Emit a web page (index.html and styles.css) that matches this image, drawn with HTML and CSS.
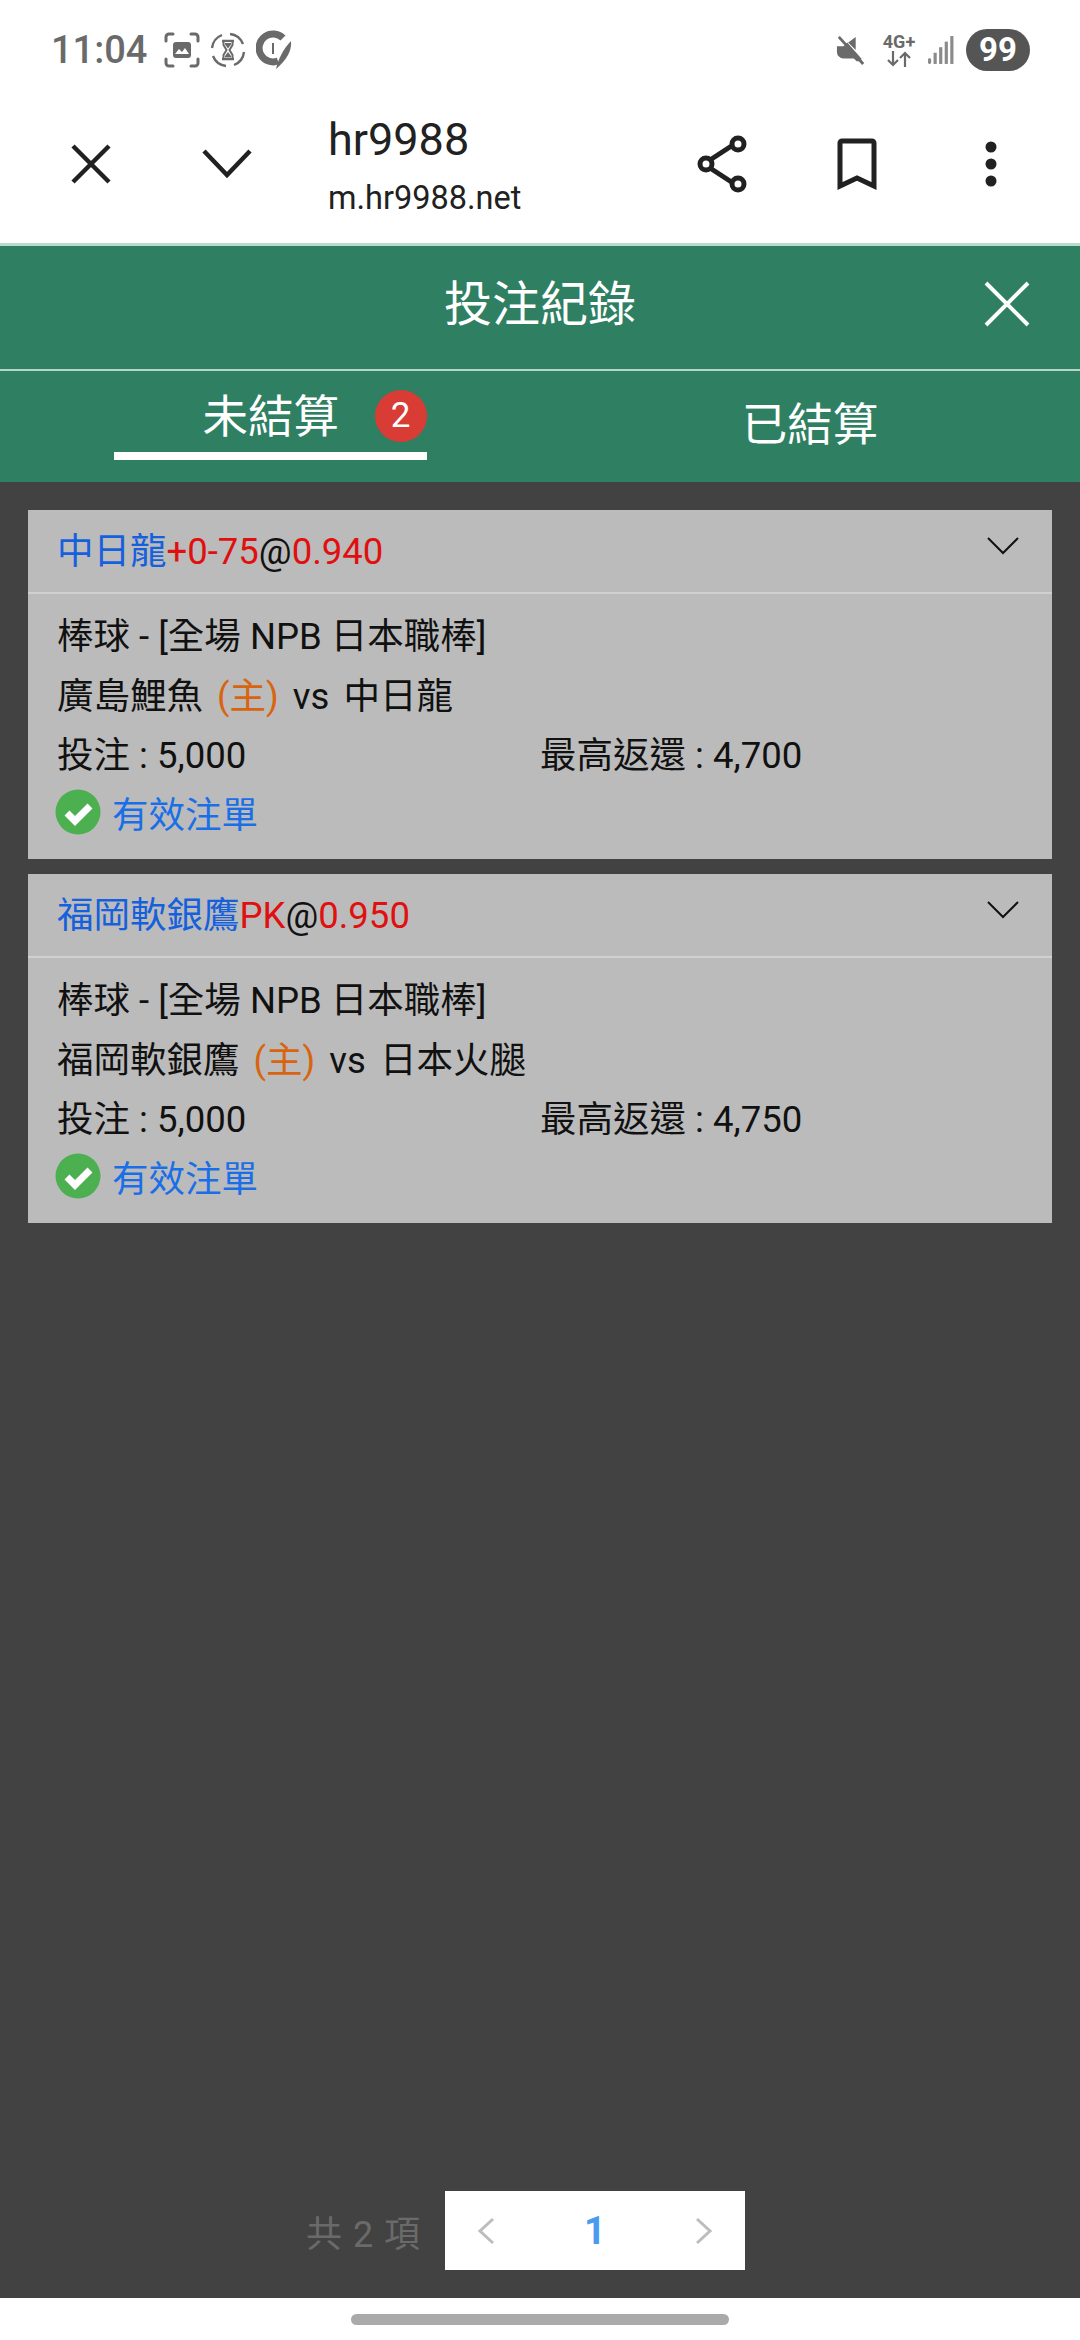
FILE: index.html
```html
<!doctype html>
<html lang="zh-Hant">
<head>
  <title>投注紀錄</title>
  <meta charset="utf-8">
  <link rel="stylesheet" href="styles.css">
</head>
<body>

<div class="status">
  <span class="time">11:04</span>
  <svg class="st-icon" width="36" height="36" viewBox="0 0 36 36" fill="none" stroke="#6a6a6a" stroke-width="3" stroke-linecap="round">
    <path d="M2 9V5a3 3 0 0 1 3-3h4M27 2h4a3 3 0 0 1 3 3v4M34 27v4a3 3 0 0 1-3 3h-4M9 34H5a3 3 0 0 1-3-3v-4"/>
    <rect x="9" y="10" width="18" height="16" rx="3" fill="#6a6a6a" stroke="none"/>
    <path d="M11 22l4-5 3 3 3-4 4 6z" fill="#fff" stroke="none"/>
  </svg>
  <svg class="st-icon" width="36" height="36" viewBox="0 0 36 36" fill="none" stroke="#6a6a6a" stroke-width="2.4">
    <path d="M20 2a16 16 0 0 1 13 10M34 20a16 16 0 0 1-10 13M16 34A16 16 0 0 1 3 24M2 16A16 16 0 0 1 12 3"/>
    <path d="M12 9h12M12 27h12" stroke-width="2.4"/>
    <path d="M13.5 9h9v4l-3 5 3 5v4h-9v-4l3-5-3-5z" fill="#fff" stroke-width="2"/>
    <path d="M15 11h6v1.5l-3 4-3-4zM15 25.500v-1.500l3-4 3 4v1.500z" fill="#6a6a6a" stroke="none"/>
  </svg>
  <svg class="st-icon" width="36" height="40" viewBox="0 0 36 40" fill="none">
    <path d="M27 8A14 14 0 1 0 22 31" stroke="#6a6a6a" stroke-width="7"/>
    <path d="M35 11c1 9-4 19-15 28 2-9 7-20 15-28z" fill="#6a6a6a"/>
    <path d="M17 13v11" stroke="#6a6a6a" stroke-width="2"/>
  </svg>
  <span class="status-gap"></span>
  <svg class="st-right" width="30" height="32" viewBox="0 0 32 32" fill="#6a6a6a">
    <path d="M1 12h7l4-4 15 17v3h-5l-3-3H8a7 7 0 0 1-7-7z"/>
    <path d="M21 2v14L13 8z"/>
    <path d="M3 2l26 29" stroke="#6a6a6a" stroke-width="3"/>
  </svg>
  <div class="net">
    <span>4G+</span>
    <svg width="24" height="16" viewBox="0 0 24 16" fill="none" stroke="#6a6a6a" stroke-width="2.2">
      <path d="M6 0v14M1 9l5 5 5-5M18 16V2M13 7l5-5 5 5"/>
    </svg>
  </div>
  <svg class="signal" width="26" height="30" viewBox="0 0 28 30" fill="#8a8a8a">
    <rect x="0" y="24" width="3.4" height="6" rx="1.5"/>
    <rect x="6" y="18" width="3.4" height="12"/>
    <rect x="12" y="12" width="3.4" height="18"/>
    <rect x="18" y="6" width="3.4" height="24"/>
    <rect x="24" y="0" width="3.4" height="30"/>
  </svg>
  <span class="battery">99</span>
</div>

<div class="browser">
  <div class="br-btn">
    <svg width="42" height="42" viewBox="0 0 42 42" fill="none" stroke="#212121" stroke-width="4.5">
      <path d="M3 3l36 36M39 3L3 39"/>
    </svg>
  </div>
  <div class="br-btn br-gap">
    <svg width="50" height="32" viewBox="0 0 50 32" fill="none" stroke="#212121" stroke-width="4.5">
      <path d="M2 3l23 24L48 3"/>
    </svg>
  </div>
  <div class="br-title">
    <div class="br-name">hr9988</div>
    <div class="br-url">m.hr9988.net</div>
  </div>
  <div class="br-btn">
    <svg width="50" height="58" viewBox="0 0 50 58" fill="none" stroke="#212121" stroke-width="5">
      <path d="M13 25L36 10M13 33l23 15"/>
      <circle cx="9" cy="29" r="6" fill="#fff"/>
      <circle cx="41" cy="9" r="6" fill="#fff"/>
      <circle cx="41" cy="49" r="6" fill="#fff"/>
    </svg>
  </div>
  <div class="br-btn br-mid">
    <svg width="40" height="52" viewBox="0 0 40 52" fill="none" stroke="#212121" stroke-width="5">
      <path d="M3 48V5a2 2 0 0 1 2-2h30a2 2 0 0 1 2 2v43l-17-8z"/>
    </svg>
  </div>
  <div class="br-btn">
    <svg width="12" height="46" viewBox="0 0 12 46" fill="#212121">
      <circle cx="6" cy="6" r="5.5"/>
      <circle cx="6" cy="23" r="5.5"/>
      <circle cx="6" cy="40" r="5.5"/>
    </svg>
  </div>
</div>

<div class="head">
  <span></span>
  <h1>投注紀錄</h1>
  <svg class="head-close" width="46" height="46" viewBox="0 0 46 46" fill="none" stroke="#fff" stroke-width="4">
    <path d="M2 2l42 42M44 2L2 44"/>
  </svg>
</div>

<div class="tabs">
  <div class="tab tab-first">
    <div class="tab-on">
      <span>未結算</span>
      <span class="badge">2</span>
    </div>
  </div>
  <div class="tab tab-off">已結算</div>
</div>

<div class="main">
  <div class="card">
    <div class="card-head">
      <div class="pick"><span class="blue">中日龍</span><span class="red">+0-75</span>@<span class="red">0.940</span></div>
      <svg class="arrow" width="32" height="18" viewBox="0 0 32 18" fill="none" stroke="#111" stroke-width="2">
        <path d="M1 1l15 15L31 1"/>
      </svg>
    </div>
    <div class="card-body">
      <div class="row">棒球 - [全場 NPB 日本職棒]</div>
      <div class="row teams">廣島鯉魚 <span class="home">(主)</span> vs 中日龍</div>
      <div class="row row-2">
        <span>投注 : 5,000</span>
        <span>最高返還 : 4,700</span>
      </div>
      <div class="row valid">
        <svg width="46" height="46" viewBox="0 0 46 46">
          <circle cx="23" cy="23" r="22.5" fill="#4caf50"/>
          <path d="M12 24l8 8 15-15" fill="none" stroke="#fff" stroke-width="7"/>
        </svg>
        <span>有效注單</span>
      </div>
    </div>
  </div>

  <div class="card">
    <div class="card-head">
      <div class="pick"><span class="blue">福岡軟銀鷹</span><span class="red">PK</span>@<span class="red">0.950</span></div>
      <svg class="arrow" width="32" height="18" viewBox="0 0 32 18" fill="none" stroke="#111" stroke-width="2">
        <path d="M1 1l15 15L31 1"/>
      </svg>
    </div>
    <div class="card-body">
      <div class="row">棒球 - [全場 NPB 日本職棒]</div>
      <div class="row teams">福岡軟銀鷹 <span class="home">(主)</span> vs 日本火腿</div>
      <div class="row row-2">
        <span>投注 : 5,000</span>
        <span>最高返還 : 4,750</span>
      </div>
      <div class="row valid">
        <svg width="46" height="46" viewBox="0 0 46 46">
          <circle cx="23" cy="23" r="22.5" fill="#4caf50"/>
          <path d="M12 24l8 8 15-15" fill="none" stroke="#fff" stroke-width="7"/>
        </svg>
        <span>有效注單</span>
      </div>
    </div>
  </div>

  <div class="pager">
    <span class="total">共 2 項</span>
    <div class="pages">
      <svg width="18" height="28" viewBox="0 0 18 28" fill="none" stroke="#bdbdbd" stroke-width="3">
        <path d="M16 2L3 14l13 12"/>
      </svg>
      <span class="current">1</span>
      <svg width="18" height="28" viewBox="0 0 18 28" fill="none" stroke="#bdbdbd" stroke-width="3">
        <path d="M2 2l13 12L2 26"/>
      </svg>
    </div>
  </div>
</div>

<div class="home-bar">
  <div class="home-pill"></div>
</div>

</body>
</html>
```

FILE: styles.css
```css
html {
  height: 100%;
}

body {
  margin: 0;
  padding: 0;
  width: 1080px;
  height: 2340px;
  display: flex;
  flex-direction: column;
  background: #fff;
  color: #111;
  font-family: Roboto, "Noto Sans CJK TC", sans-serif;
}

/* phone status bar */
.status {
  height: 90px;
  padding: 10px 50px 0 51px;
  box-sizing: border-box;
  display: flex;
  align-items: center;
  color: #6a6a6a;
}

.time {
  font-size: 38px;
  font-weight: 500;
  margin-right: 17px;
}

.st-icon {
  margin-right: 10px;
}

.status-gap {
  flex: 1;
}

.st-right {
  margin-right: 16px;
}

.net {
  width: 34px;
  margin-right: 12px;
  display: flex;
  flex-direction: column;
  align-items: center;
  font-size: 18px;
  line-height: 18px;
  font-weight: 700;
}

.signal {
  margin-right: 12px;
}

.battery {
  width: 64px;
  height: 42px;
  border-radius: 21px;
  background: #555;
  color: #fff;
  font-size: 33px;
  font-weight: 700;
  line-height: 42px;
  text-align: center;
}

/* in-app browser bar */
.browser {
  height: 153px;
  padding: 0 45px 6px 47px;
  box-sizing: border-box;
  display: flex;
  align-items: center;
}

.br-btn {
  width: 88px;
  height: 88px;
  display: flex;
  align-items: center;
  justify-content: center;
}

.br-gap {
  margin-left: 48px;
  margin-right: 57px;
}

.br-mid {
  margin: 0 46px 0 47px;
}

.br-title {
  flex: 1;
  margin-top: 6px;
  color: #212121;
}

.br-name {
  font-size: 45px;
  line-height: 52px;
}

.br-url {
  font-size: 32.5px;
  line-height: 44px;
  margin-top: 10px;
}

/* green title */
.head {
  height: 128px;
  padding: 0 50px 8px;
  box-sizing: border-box;
  display: grid;
  grid-template-columns: 1fr auto 1fr;
  align-items: center;
  background: #2f7f63;
  border-top: 3px solid #b7dccb;
  border-bottom: 2px solid #b7d4c8;
}

.head h1 {
  margin: 0 0 8px;
  font-size: 48px;
  font-weight: 400;
  color: #fff;
}

.head-close {
  justify-self: end;
}

.tabs {
  height: 111px;
  display: flex;
  background: #2f7f63;
  color: #fff;
  font-size: 45.5px;
}

.tab {
  width: 50%;
  box-sizing: border-box;
  display: flex;
  align-items: center;
  justify-content: center;
}

.tab-first {
  align-items: flex-start;
}

.tab-off {
  padding-bottom: 12px;
}

.tab-on {
  width: 313px;
  height: 89px;
  padding: 5px 0 2px 89px;
  box-sizing: border-box;
  display: flex;
  align-items: center;
  justify-content: space-between;
  border-bottom: 8px solid #fff;
}

.badge {
  width: 52px;
  height: 52px;
  margin-top: 6px;
  border-radius: 50%;
  background: #d93b35;
  font-size: 35px;
  line-height: 52px;
  text-align: center;
}

/* list */
.main {
  flex: 1;
  padding: 28px 28px 28px 28px;
  display: flex;
  flex-direction: column;
  background: #424242;
}

.card {
  background: #bbb;
  margin-bottom: 15px;
  font-size: 36.5px;
}

.card-head {
  height: 84px;
  padding: 0 33px 0 29px;
  box-sizing: border-box;
  display: flex;
  align-items: center;
  justify-content: space-between;
  border-bottom: 2px solid #d0d0d0;
}

.pick {
  margin-bottom: 6px;
}

.arrow {
  margin-bottom: 10px;
}

.blue {
  color: #1560dc;
}

.red {
  color: #e01010;
}

.card-body {
  padding: 10px 29px 17px;
}

.row {
  height: 59.5px;
  display: flex;
  align-items: center;
  white-space: pre-wrap;
}

.teams {
  word-spacing: 5px;
}

.row-2 span:first-child {
  width: 483px;
}

.home {
  color: #d9640f;
}

.valid {
  color: #1a6fe8;
  margin-left: -2px;
  gap: 11px;
}

.pager {
  margin-top: auto;
  margin-right: 307px;
  display: flex;
  align-items: center;
  justify-content: flex-end;
}

.total {
  width: 139px;
  font-size: 36px;
  color: #6a6a6a;
  letter-spacing: 1px;
}

.pages {
  width: 300px;
  height: 79px;
  box-sizing: border-box;
  padding: 0 32px;
  display: flex;
  align-items: center;
  justify-content: space-between;
  background: #fff;
}

.current {
  font-size: 38px;
  font-weight: 700;
  color: #4a9bf0;
}

.home-bar {
  height: 42px;
  display: flex;
  align-items: flex-start;
  justify-content: center;
  padding-top: 16px;
  box-sizing: border-box;
}

.home-pill {
  width: 378px;
  height: 11px;
  border-radius: 6px;
  background: #aaa;
}
```
